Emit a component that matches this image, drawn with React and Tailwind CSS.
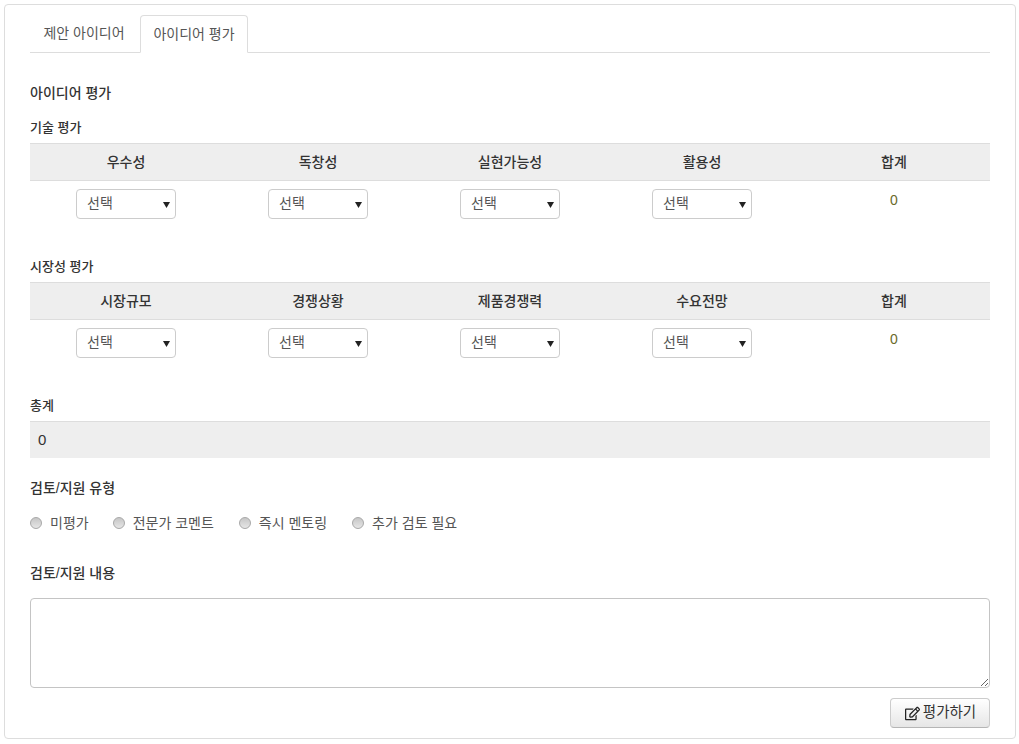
import React from "react";
import { FaRegEdit } from "react-icons/fa";

const techCols = ["우수성", "독창성", "실현가능성", "활용성"];
const marketCols = ["시장규모", "경쟁상황", "제품경쟁력", "수요전망"];
const radios = [
  { label: "미평가", cls: "mr-6" },
  { label: "전문가 코멘트", cls: "mr-[25px]" },
  { label: "즉시 멘토링", cls: "mr-[25px]" },
  { label: "추가 검토 필요", cls: "" },
];

function FakeSelect() {
  return (
    <div className="w-[100px] h-[30px] mx-auto flex items-center justify-between pl-[10px] pr-[5px] bg-white border border-[#cccccc] rounded-[4px] text-[14px] text-[#555555]">
      <span className="pb-[2px]">선택</span>
      <svg width="7" height="7" viewBox="0 0 7 7">
        <path d="M0 1h7L3.5 7z" fill="#222222" />
      </svg>
    </div>
  );
}

function ScoreTable({ title, cols }) {
  return (
    <div>
      <div className="h-[18px] leading-[18px] text-[13px] font-medium text-[#333333]">{title}</div>
      <div className="mt-[6px] grid grid-cols-5 h-[38px] bg-[#eeeeee] border-y border-[#dddddd] text-[14px] font-medium text-[#333333]">
        {[...cols, "합계"].map((c) => (
          <div key={c} className="flex items-center justify-center">{c}</div>
        ))}
      </div>
      <div className="grid grid-cols-5 pt-[8px]">
        {cols.map((c) => (
          <FakeSelect key={c} />
        ))}
        <div className="pt-[1px] text-center text-[14px] leading-[20px] text-[#6b6b2a]">0</div>
      </div>
    </div>
  );
}

export default function App() {
  return (
    <div className="w-[1019px] h-[744px] pt-[4px] px-[4px] bg-white font-['Liberation_Sans','Noto_Sans_CJK_KR',sans-serif] overflow-hidden">
      <div className="w-[1012px] h-[735px] px-[25px] pt-[10px] border border-[#dddddd] rounded-[4px]">
        {/* Tabs */}
        <div className="flex h-[38px] border-b border-[#dddddd] text-[14px] text-[#555555]">
          <div className="w-[110px] h-[37px] pr-[2px] flex items-center justify-center">제안 아이디어</div>
          <div className="w-[108px] h-[38px] flex items-center justify-center bg-white border border-[#dddddd] border-b-white rounded-t-[4px]">아이디어 평가</div>
        </div>

        <div className="mt-[31px] h-[20px] leading-[18px] text-[14px] font-medium text-[#333333]">아이디어 평가</div>

        <div className="mt-[15px]">
          <ScoreTable title="기술 평가" cols={techCols} />
        </div>
        <div className="mt-[39px]">
          <ScoreTable title="시장성 평가" cols={marketCols} />
        </div>

        <div className="mt-[39px] h-[18px] leading-[18px] text-[13px] font-medium text-[#333333]">총계</div>
        <div className="mt-[6px] h-[37px] flex items-center px-[8px] bg-[#eeeeee] border-t border-[#dddddd] text-[15px] text-[#333333]">0</div>

        <div className="mt-[21px] h-[20px] leading-[18px] text-[14px] font-medium text-[#333333]">검토/지원 유형</div>

        <div className="mt-[14px] flex items-center h-[20px] text-[14px] text-[#555555]">
          {radios.map((r) => (
            <div key={r.label} className={`flex items-center ${r.cls}`}>
              <span className="w-[12px] h-[12px] rounded-full border border-[#a8a8a8] bg-gradient-to-b from-[#c6c6c6] to-[#e6e6e6] mr-[8px]" />
              <span>{r.label}</span>
            </div>
          ))}
        </div>

        <div className="mt-[31px] h-[20px] leading-[18px] text-[14px] font-medium text-[#333333]">검토/지원 내용</div>

        <textarea className="block mt-[14px] w-[960px] h-[90px] border border-[#c4c4c4] rounded-[4px] bg-white" />

        <div className="mt-[10px] flex justify-end">
          <div className="w-[100px] h-[30px] flex items-center justify-center gap-[3px] pl-[1px] border border-[#cccccc] border-b-[#b5b5b5] rounded-[4px] bg-gradient-to-b from-white to-[#e6e6e6] text-[14.5px] text-[#333333]">
            <FaRegEdit className="text-[15px] text-[#222222]" />
            <span>평가하기</span>
          </div>
        </div>
      </div>
    </div>
  );
}
